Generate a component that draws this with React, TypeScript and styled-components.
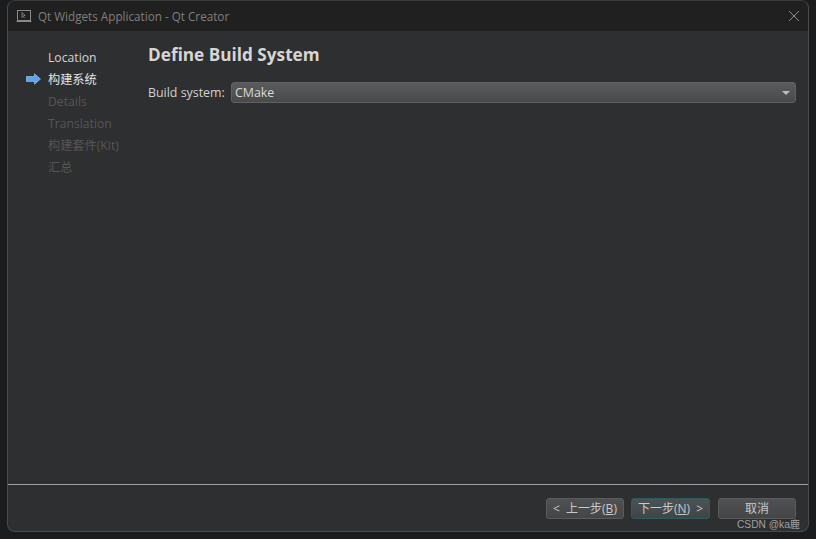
import styled, { createGlobalStyle } from "styled-components";

const FONT = `"Open Sans", "Noto Sans", "Noto Sans CJK SC", sans-serif`;

const GlobalStyle = createGlobalStyle`
  html, body {
    margin: 0;
    padding: 0;
    background: #1b1c1d;
  }
  * {
    box-sizing: border-box;
  }
`;

const Page = styled.div`
  width: 816px;
  height: 539px;
  padding-left: 7px;
  overflow: hidden;
  position: relative;
  font-family: ${FONT};
`;

const Dialog = styled.div`
  width: 802px;
  height: 532px;
  display: flex;
  flex-direction: column;
  background: #2e2f30;
  border: 1px solid #4a4b4c;
  border-top-color: #3a3a3a;
  border-radius: 8px;
  overflow: hidden;
`;

const TitleBar = styled.div`
  height: 30px;
  flex: none;
  display: flex;
  align-items: center;
  padding: 0 8px 1px 8px;
  background: #202020;
`;

const Title = styled.span`
  margin-left: 6px;
  font-size: 11.7px;
  color: #7f7f7f;
  flex: 1;
`;

const Body = styled.div`
  flex: 1;
  display: flex;
  min-height: 0;
`;

const Sidebar = styled.ul`
  width: 140px;
  flex: none;
  list-style: none;
  margin: 0;
  padding: 15px 0 0 18px;
`;

const Step = styled.li<{ $state: "done" | "current" | "todo" }>`
  height: 22px;
  display: flex;
  align-items: center;
  font-size: 12.2px;
  color: ${(p) =>
    p.$state === "todo" ? "#555657" : p.$state === "current" ? "#e4e4e4" : "#d4d4d4"};
`;

const StepMarker = styled.span`
  width: 22px;
  flex: none;
  display: flex;
  align-items: center;
`;

const Main = styled.div`
  flex: 1;
  padding: 11px 12px 0 0;
`;

const Heading = styled.h1`
  margin: 0;
  height: 25px;
  line-height: 25px;
  font-size: 17.2px;
  font-weight: 700;
  color: #d6d6d6;
`;

const FormRow = styled.div`
  margin-top: 15px;
  display: flex;
  align-items: center;
  gap: 6px;
`;

const Label = styled.label`
  width: 77px;
  font-size: 12.4px;
  color: #d2d2d2;
  white-space: nowrap;
`;

const Combo = styled.div`
  flex: 1;
  height: 21px;
  padding: 0 5px 0 3px;
  display: flex;
  align-items: center;
  justify-content: space-between;
  font-size: 12.4px;
  color: #d8d8d8;
  background: linear-gradient(#5a5b5c, #484a4b);
  border: 1px solid #5f6162;
  border-radius: 3px;
`;

const ComboArrow = styled.span`
  width: 0;
  height: 0;
  border-left: 4px solid transparent;
  border-right: 4px solid transparent;
  border-top: 4px solid #bcbcbc;
`;

const Footer = styled.div`
  height: 47px;
  flex: none;
  border-top: 1px solid #a2a2a2;
  padding: 13px 12px 0 0;
  display: flex;
  justify-content: flex-end;
  gap: 7px;
`;

const Button = styled.button<{ $primary?: boolean; $width: number }>`
  width: ${(p) => p.$width}px;
  height: 21px;
  padding: 0 0 1px;
  margin-right: ${(p) => (p.$primary ? 1 : 0)}px;
  font-family: ${FONT};
  font-size: 12px;
  word-spacing: 3px;
  color: #c8c8c8;
  background: ${(p) =>
    p.$primary
      ? "linear-gradient(#4b5354, #3f4546)"
      : "linear-gradient(#505152, #444546)"};
  border: 1px solid ${(p) => (p.$primary ? "#2f5a5f" : "#5a5b5c")};
  border-radius: 3px;
  white-space: pre;
`;

const Hotkey = styled.span`
  text-decoration: underline;
`;

const Watermark = styled.span`
  position: absolute;
  left: 737px;
  top: 516px;
  font-family: "Liberation Sans", "Noto Sans CJK SC", sans-serif;
  font-size: 10.2px;
  color: #a0a0a0;
`;

const AppIcon = () => (
  <svg width="16" height="14" viewBox="0 0 16 14" fill="none" stroke="#8a8a8a">
    <rect x="1.5" y="1.5" width="13" height="10" />
    <path d="M0.5 12.5h15" />
    <path d="M6 3.5v5l1.2-1.2 1.3 1.7M6 3.5l3.2 3H7.5" strokeWidth="0.9" />
  </svg>
);

const CloseIcon = () => (
  <svg width="12" height="12" viewBox="0 0 12 12" stroke="#8c8c8c" strokeWidth="1">
    <path d="M1 1l10 10M11 1L1 11" />
  </svg>
);

const ArrowIcon = () => (
  <svg width="15" height="12" viewBox="0 0 15 12">
    <path d="M0.5 3.5h8V0.8L14.5 6 8.5 11.2V8.5h-8z" fill="#5fa4f2" stroke="#a8cdf6" strokeWidth="0.6" />
  </svg>
);

const steps: { label: string; state: "done" | "current" | "todo" }[] = [
  { label: "Location", state: "done" },
  { label: "构建系统", state: "current" },
  { label: "Details", state: "todo" },
  { label: "Translation", state: "todo" },
  { label: "构建套件(Kit)", state: "todo" },
  { label: "汇总", state: "todo" },
];

export default function App() {
  return (
    <Page>
      <GlobalStyle />
      <Dialog>
        <TitleBar>
          <AppIcon />
          <Title>Qt Widgets Application - Qt Creator</Title>
          <CloseIcon />
        </TitleBar>
        <Body>
          <Sidebar>
            {steps.map((s) => (
              <Step key={s.label} $state={s.state}>
                <StepMarker>{s.state === "current" && <ArrowIcon />}</StepMarker>
                {s.label}
              </Step>
            ))}
          </Sidebar>
          <Main>
            <Heading>Define Build System</Heading>
            <FormRow>
              <Label>Build system:</Label>
              <Combo>
                CMake
                <ComboArrow />
              </Combo>
            </FormRow>
          </Main>
        </Body>
        <Footer>
          <Button $width={78}>
            {"< 上一步("}
            <Hotkey>B</Hotkey>
            {")"}
          </Button>
          <Button $width={79} $primary>
            {"下一步("}
            <Hotkey>N</Hotkey>
            {") >"}
          </Button>
          <Button $width={78}>取消</Button>
        </Footer>
      </Dialog>
      <Watermark>CSDN @ka鹿</Watermark>
    </Page>
  );
}
